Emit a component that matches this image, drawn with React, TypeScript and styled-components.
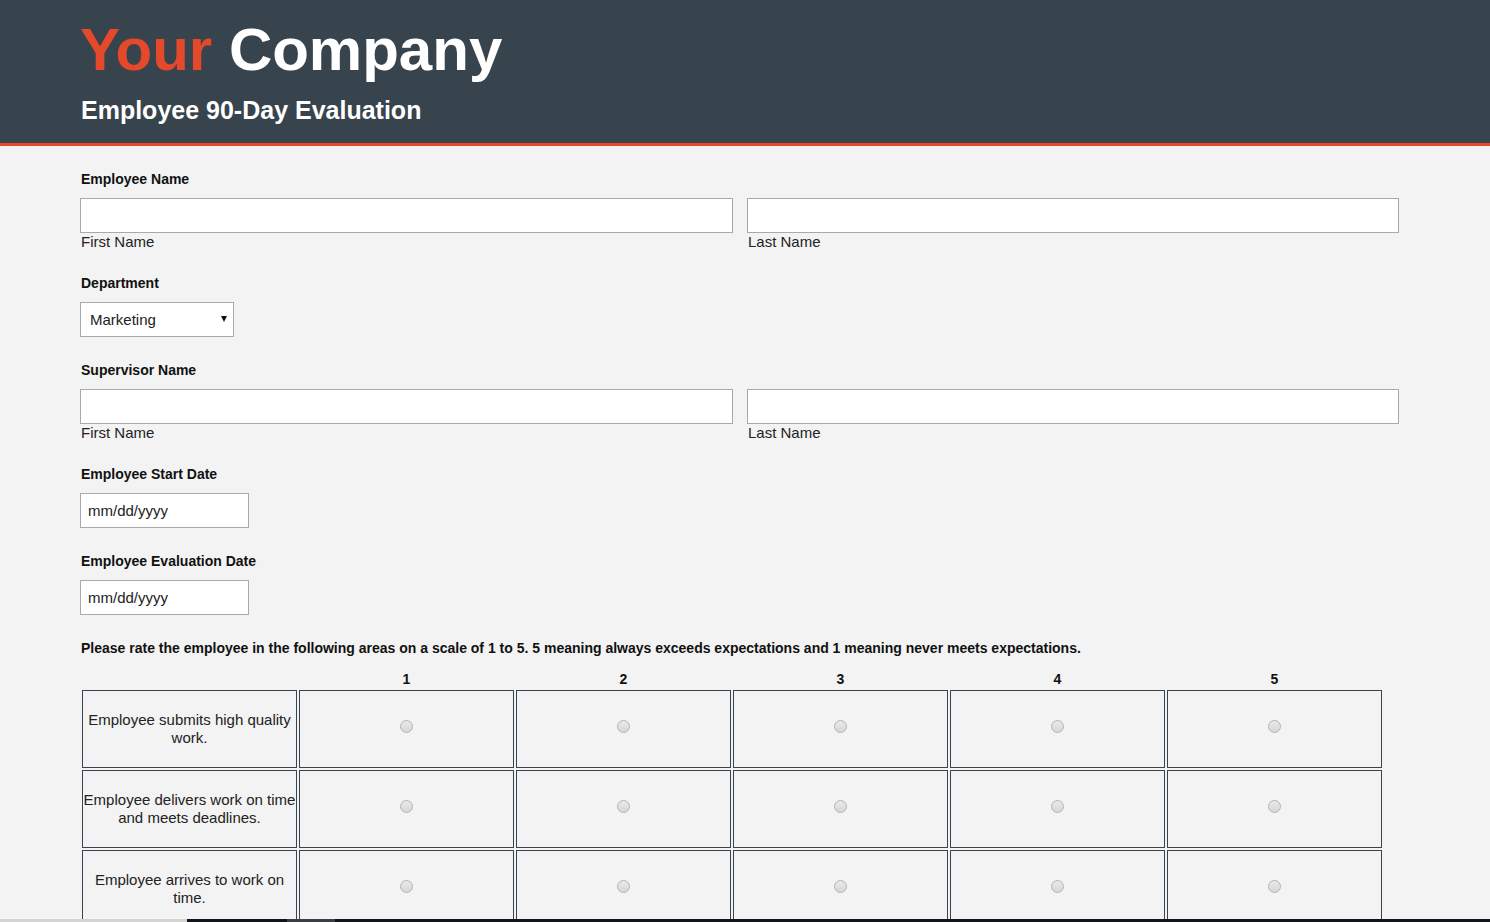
import React from "react";
import styled, { createGlobalStyle } from "styled-components";

const GlobalStyle = createGlobalStyle`
  html, body {
    margin: 0;
    padding: 0;
    background: #f3f3f3;
    font-family: "Liberation Sans", Arial, sans-serif;
    overflow: hidden;
  }
  * { box-sizing: border-box; }
`;

const Header = styled.header`
  background: #38444d;
  border-bottom: 3px solid #e4492c;
  padding: 16px 80px 18px 80px;
`;

const Brand = styled.h1`
  margin: 0;
  font-size: 60px;
  line-height: 68px;
  font-weight: bold;
  color: #fff;
  span {
    color: #e4492c;
  }
`;

const SubTitle = styled.h2`
  margin: 12px 0 0 1px;
  font-size: 25px;
  line-height: 29px;
  font-weight: bold;
  color: #fff;
`;

const Main = styled.main`
  padding: 25px 80px 40px 80px;
`;

const Field = styled.div`
  margin-bottom: 25px;
`;

const Label = styled.div`
  font-size: 14px;
  line-height: 16px;
  font-weight: bold;
  color: #111;
  margin: 0 0 11px 1px;
`;

const NameRow = styled.div`
  display: grid;
  grid-template-columns: 653px 652px;
  gap: 14px;
`;

const TextBox = styled.input<{ $w?: number }>`
  display: block;
  width: ${(p) => (p.$w ? `${p.$w}px` : "100%")};
  height: 35px;
  border: 1px solid #a9a9a9;
  background: #fff;
  font-family: inherit;
  font-size: 15px;
  color: #222;
  padding: 0 7px;
  outline: none;
  &::placeholder {
    color: #222;
  }
`;

const SubLabel = styled.div`
  font-size: 15px;
  line-height: 17px;
  color: #222;
  padding-left: 1px;
`;

const SelectWrap = styled.div`
  position: relative;
  width: 154px;
  &::after {
    content: "";
    position: absolute;
    right: 7px;
    top: 14px;
    border-left: 3.5px solid transparent;
    border-right: 3.5px solid transparent;
    border-top: 6px solid #111;
    pointer-events: none;
  }
`;

const Select = styled.select`
  appearance: none;
  width: 154px;
  height: 35px;
  border: 1px solid #a9a9a9;
  border-radius: 0;
  background: #fff;
  font-family: inherit;
  font-size: 15px;
  color: #222;
  padding: 0 9px;
  outline: none;
`;

const Prompt = styled.p`
  margin: 0 0 12px 1px;
  font-size: 14px;
  line-height: 16px;
  font-weight: bold;
  color: #111;
`;

const Grid = styled.table`
  border-collapse: separate;
  border-spacing: 2px;
`;

const Head = styled.th`
  font-size: 14px;
  line-height: 16px;
  font-weight: bold;
  color: #111;
  padding: 1px 0;
  text-align: center;
`;

const Cell = styled.td`
  width: 215px;
  height: 78px;
  border: 1px solid #37434d;
  padding: 0;
  text-align: center;
  vertical-align: middle;
  font-size: 15px;
  line-height: 18px;
  color: #222;
`;

const Radio = styled.input`
  appearance: none;
  display: inline-block;
  width: 13px;
  height: 13px;
  margin: 0 0 6px 0;
  border-radius: 50%;
  border: 1px solid #b4b4b4;
  background: linear-gradient(#e9e9e9, #d6d6d6);
  vertical-align: middle;
`;

const TaskEdge = styled.div`
  position: fixed;
  left: 0;
  right: 0;
  bottom: 0;
  height: 3px;
  display: flex;
  background: #10151b;
`;

const EdgePart = styled.div<{ $w: number; $c: string }>`
  width: ${(p) => p.$w}px;
  background: ${(p) => p.$c};
`;

const criteria = [
  "Employee submits high quality work.",
  "Employee delivers work on time and meets deadlines.",
  "Employee arrives to work on time.",
  "Employee communicates clearly with the team.",
];

function NameField({ label }: { label: string }) {
  return (
    <Field>
      <Label>{label}</Label>
      <NameRow>
        <div>
          <TextBox type="text" />
          <SubLabel>First Name</SubLabel>
        </div>
        <div>
          <TextBox type="text" />
          <SubLabel>Last Name</SubLabel>
        </div>
      </NameRow>
    </Field>
  );
}

function DateField({ label }: { label: string }) {
  return (
    <Field>
      <Label>{label}</Label>
      <TextBox type="text" placeholder="mm/dd/yyyy" $w={169} />
    </Field>
  );
}

export default function App() {
  return (
    <>
      <GlobalStyle />
      <Header>
        <Brand>
          <span>Your</span> Company
        </Brand>
        <SubTitle>Employee 90-Day Evaluation</SubTitle>
      </Header>
      <Main>
        <NameField label="Employee Name" />
        <Field>
          <Label>Department</Label>
          <SelectWrap>
            <Select defaultValue="Marketing">
              <option>Marketing</option>
              <option>Sales</option>
              <option>Engineering</option>
              <option>Finance</option>
            </Select>
          </SelectWrap>
        </Field>
        <NameField label="Supervisor Name" />
        <DateField label="Employee Start Date" />
        <DateField label="Employee Evaluation Date" />
        <Prompt>
          Please rate the employee in the following areas on a scale of 1 to 5. 5 meaning always
          exceeds expectations and 1 meaning never meets expectations.
        </Prompt>
        <Grid>
          <thead>
            <tr>
              <Head />
              {[1, 2, 3, 4, 5].map((n) => (
                <Head key={n}>{n}</Head>
              ))}
            </tr>
          </thead>
          <tbody>
            {criteria.map((c, i) => (
              <tr key={c}>
                <Cell>{c}</Cell>
                {[1, 2, 3, 4, 5].map((n) => (
                  <Cell key={n}>
                    <Radio type="radio" name={`q${i}`} value={n} />
                  </Cell>
                ))}
              </tr>
            ))}
          </tbody>
        </Grid>
      </Main>
      <TaskEdge>
        <EdgePart $w={187} $c="#d4d4d4" />
        <EdgePart $w={100} $c="#10151b" />
        <EdgePart $w={48} $c="#3a3f46" />
      </TaskEdge>
    </>
  );
}
